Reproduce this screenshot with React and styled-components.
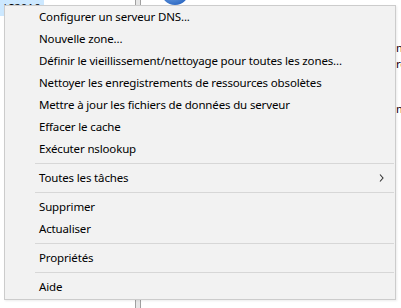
import React from 'react';
import styled, { createGlobalStyle } from 'styled-components';

const GlobalStyle = createGlobalStyle`
  html, body {
    margin: 0;
    padding: 0;
    background: #ffffff;
  }
`;

const Page = styled.div`
  position: relative;
  width: 401px;
  height: 308px;
  overflow: hidden;
  background: #ffffff;
  font-family: "Segoe UI", "Noto Sans", sans-serif;
  font-size: 11.5px;
  letter-spacing: -0.15px;
  color: #000;
`;

const Backdrop = styled.div`
  display: flex;
  height: 100%;
`;

const TreePane = styled.div`
  width: 135px;
  flex-shrink: 0;
`;

const TreeItem = styled.div`
  display: inline-block;
  margin-top: -11px;
  padding: 0 4px 0 2px;
  height: 16px;
  line-height: 16px;
  background: ${p => (p.$selected ? '#cce8ff' : 'transparent')};
  color: #000;
  white-space: nowrap;
`;

const Splitter = styled.div`
  width: 6px;
  flex-shrink: 0;
  border-left: 1px solid #a0a0a0;
  border-right: 1px solid #a0a0a0;
  background: #e6e6e6;
  box-sizing: border-box;
`;

const ResultPane = styled.div`
  flex: 1;
  display: flex;
  flex-direction: column;
  padding-left: 19px;
`;

const NodeIcon = styled.svg`
  display: block;
  margin-top: -10px;
`;

const ResultLine = styled.div`
  margin-top: ${p => p.$gap}px;
  padding-left: 236px;
  height: 16px;
  line-height: 16px;
  white-space: nowrap;
  color: #1a0010;
`;

const Menu = styled.div`
  position: absolute;
  left: 4px;
  top: 5px;
  width: 392px;
  height: 295px;
  box-sizing: border-box;
  border: 1px solid #cccccc;
  background: #f2f2f2;
  padding: 0 0 1px 0;
  display: flex;
  flex-direction: column;
  box-shadow: 1px 1px 2px rgba(0, 0, 0, 0.08);
`;

const Item = styled.div`
  display: flex;
  align-items: center;
  box-sizing: border-box;
  height: 22px;
  flex-shrink: 0;
  padding: 0 11px 1px 34px;
  white-space: nowrap;
`;

const Label = styled.span`
  flex: 1;
`;

const Separator = styled.div`
  height: 7px;
  flex-shrink: 0;
  display: flex;
  align-items: center;
  padding: 0 1px 0 30px;

  &::after {
    content: '';
    flex: 1;
    height: 1px;
    background: #d7d7d7;
  }
`;

const Arrow = () => (
  <svg width="5" height="8" viewBox="0 0 5 8">
    <path d="M1 0.5 L4 4 L1 7.5" fill="none" stroke="#333" strokeWidth="1.1" />
  </svg>
);

const groups = [
  [
    'Configurer un serveur DNS...',
    'Nouvelle zone...',
    'Définir le vieillissement/nettoyage pour toutes les zones...',
    'Nettoyer les enregistrements de ressources obsolètes',
    'Mettre à jour les fichiers de données du serveur',
    'Effacer le cache',
    'Exécuter nslookup',
  ],
  [{ label: 'Toutes les tâches', sub: true }],
  ['Supprimer', 'Actualiser'],
  ['Propriétés'],
  ['Aide'],
];

export default function App() {
  return (
    <Page>
      <GlobalStyle />
      <Backdrop>
        <TreePane>
          <TreeItem $selected>|S2016</TreeItem>
        </TreePane>
        <Splitter />
        <ResultPane>
          <NodeIcon width="32" height="16" viewBox="0 0 32 16">
            <defs>
              <radialGradient id="g" cx="0.4" cy="0.35" r="0.7">
                <stop offset="0" stopColor="#9cc8f5" />
                <stop offset="1" stopColor="#2a66c2" />
              </radialGradient>
            </defs>
            <circle cx="15" cy="1" r="14" fill="url(#g)" />
          </NodeIcon>
          <ResultLine $gap={34}>m</ResultLine>
          <ResultLine $gap={0}>re</ResultLine>
          <ResultLine $gap={29}>m</ResultLine>
        </ResultPane>
      </Backdrop>

      <Menu>
        {groups.map((group, gi) => (
          <React.Fragment key={gi}>
            {gi > 0 && <Separator />}
            {group.map((entry) => {
              const label = typeof entry === 'string' ? entry : entry.label;
              const sub = typeof entry !== 'string' && entry.sub;
              return (
                <Item key={label}>
                  <Label>{label}</Label>
                  {sub && <Arrow />}
                </Item>
              );
            })}
          </React.Fragment>
        ))}
      </Menu>
    </Page>
  );
}
